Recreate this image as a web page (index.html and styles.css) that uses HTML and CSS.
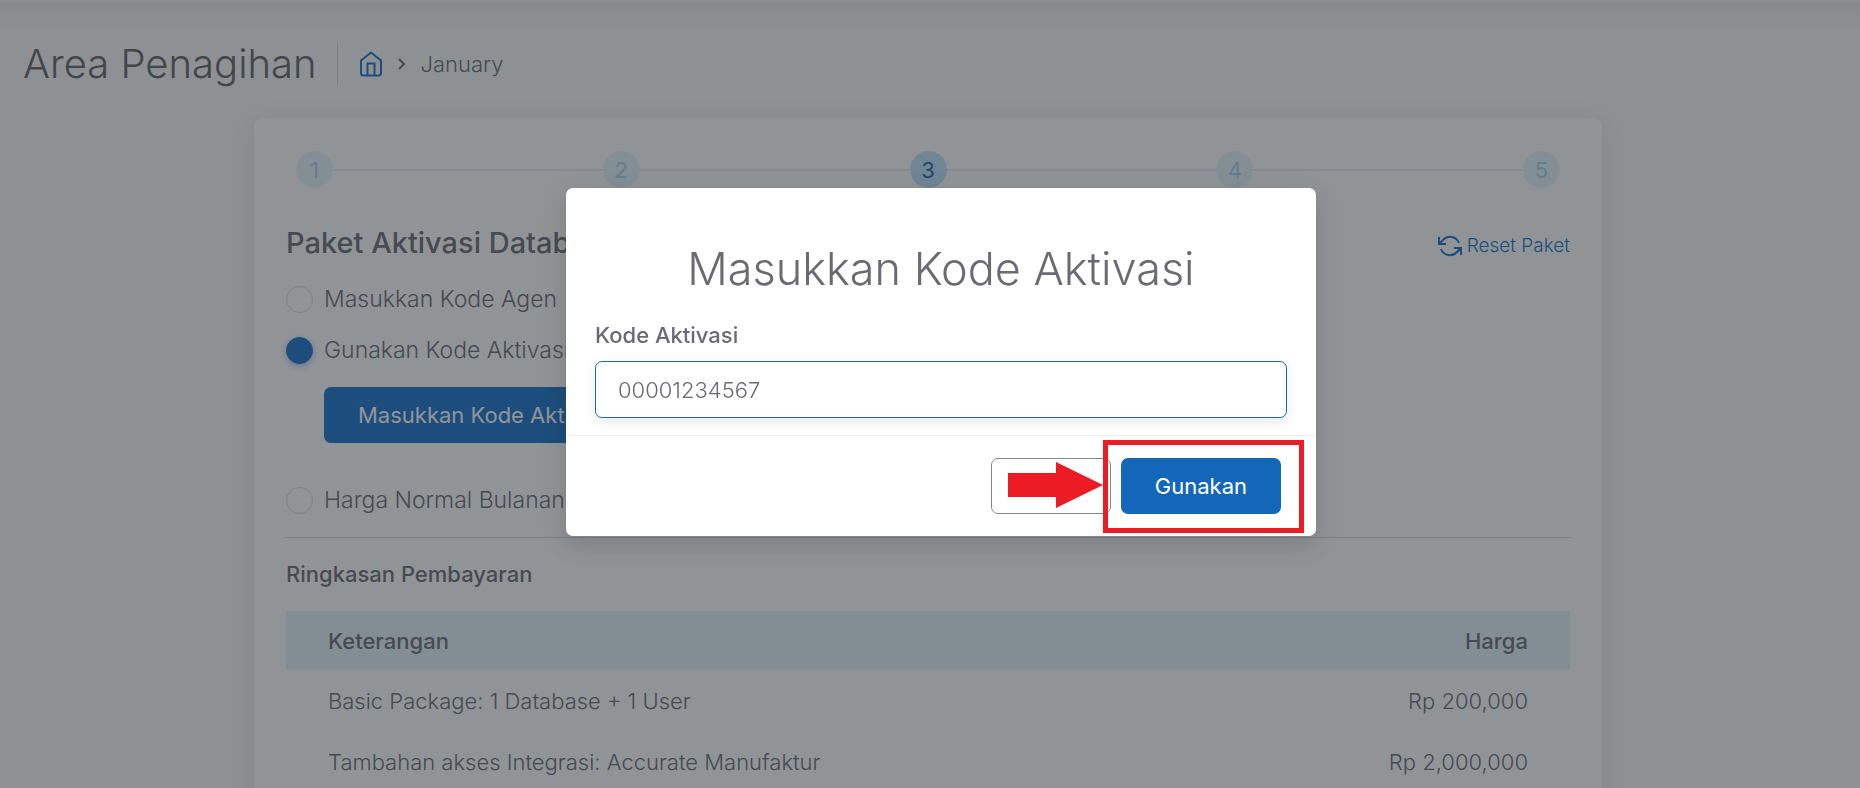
FILE: index.html
```
<!DOCTYPE html>
<html lang="id">
<head>
  <meta charset="utf-8">
  <title>Area Penagihan</title>
  <link rel="stylesheet" href="styles.css">
</head>
<body>
  <div class="page">
    <div class="navbar-shadow"></div>

    <!-- Page header -->
    <header class="content-header">
      <h1>Area Penagihan</h1>
      <nav class="breadcrumb">
        <a href="#" aria-label="Home">
          <svg width="24" height="28" viewBox="0 0 24 28" fill="none" stroke="currentColor" stroke-width="2" stroke-linejoin="round">
            <path d="M2 10.500L12 2.500l10 8V23a2.500 2.500 0 0 1-2.500 2.500h-15A2.500 2.500 0 0 1 2 23z"/>
            <path d="M8.500 25.500v-12h7v12" stroke-linejoin="miter"/>
          </svg>
        </a>
        <svg width="10" height="14" viewBox="0 0 10 14" fill="none" stroke="currentColor" stroke-width="2">
          <path d="M2 2l5 5-5 5"/>
        </svg>
        <span>January</span>
      </nav>
    </header>

    <main class="card">
      <ol class="steps">
        <li>1</li>
        <li>2</li>
        <li class="active">3</li>
        <li>4</li>
        <li>5</li>
      </ol>

      <div class="card-title">
        <h2>Paket Aktivasi Database</h2>
        <a href="#" class="reset">
          <svg width="24" height="22" viewBox="0 0 24 22" fill="none" stroke="currentColor" stroke-width="2">
            <path d="M1 2v7h7M1.500 8.500L5 5A9.500 9.500 0 0 1 21 8"/>
            <path d="M23 20v-7h-7M22.500 13.500L19 17A9.500 9.500 0 0 1 3 14"/>
          </svg>
          Reset Paket
        </a>
      </div>

      <div class="options">
        <label class="option"><input type="radio" name="paket">Masukkan Kode Agen</label>
        <label class="option"><input type="radio" name="paket" checked>Gunakan Kode Aktivasi</label>
        <button type="button" class="btn btn-primary btn-code">Masukkan Kode Aktivasi</button>
        <label class="option option-last"><input type="radio" name="paket">Harga Normal Bulanan</label>
      </div>

      <h3>Ringkasan Pembayaran</h3>
      <table class="summary">
        <thead>
          <tr><th>Keterangan</th><th>Harga</th></tr>
        </thead>
        <tbody>
          <tr><td>Basic Package: 1 Database + 1 User</td><td>Rp 200,000</td></tr>
          <tr><td>Tambahan akses Integrasi: Accurate Manufaktur</td><td>Rp 2,000,000</td></tr>
        </tbody>
      </table>
    </main>
  </div>

  <!-- Activation code modal -->
  <div class="backdrop">
    <div class="modal" role="dialog" aria-labelledby="modal-title">
      <div class="modal-body">
        <h2 id="modal-title">Masukkan Kode Aktivasi</h2>
        <label for="code">Kode Aktivasi</label>
        <input type="text" id="code" value="00001234567">
      </div>
      <div class="modal-footer">
        <button type="button" class="btn btn-outline" aria-label="Batal"></button>
        <div class="highlight">
          <button type="button" class="btn btn-primary">Gunakan</button>
          <div class="highlight-frame"></div>
          <svg class="highlight-arrow" width="95" height="46" viewBox="0 0 95 46">
            <path d="M0 11h48V0l47 23-47 23V35H0z" fill="#ed1c24"/>
          </svg>
        </div>
      </div>
    </div>
  </div>
</body>
</html>
```
FILE: styles.css
```
* {
  box-sizing: border-box;
  margin: 0;
  padding: 0;
}

body {
  font-family: Inter, "Open Sans", sans-serif;
  font-size: 22px;
  font-weight: 300;
  line-height: 28px;
  color: #6b6a72;
  background-color: #f8f8f8;
}

a {
  color: #1670c8;
  text-decoration: none;
}

.page {
  height: 100vh;
  padding-right: 4px;
  overflow: hidden;
}

/* Shadow under the fixed navbar */
.navbar-shadow {
  height: 32px;
  margin-right: -4px;
  border-top: 2px solid #f8f8f8;
  background: linear-gradient(#ececec, #f8f8f8);
}

/* Page header */
.content-header {
  display: flex;
  align-items: center;
  padding: 11px 23px 0;
}

.content-header h1 {
  font-size: 40px;
  font-weight: 300;
  line-height: 42px;
  color: #636363;
  padding-right: 20px;
  border-right: 1px solid #d6dce1;
}

.breadcrumb {
  display: flex;
  align-items: center;
  gap: 14px;
  padding-left: 21px;
}

.breadcrumb svg {
  display: block;
}

/* Card */
.card {
  width: 1348px;
  max-width: 100%;
  margin: 33px auto 0;
  padding: 33px 32px;
  background-color: #ffffff;
  border-radius: 8px;
  box-shadow: 0 4px 24px rgba(34, 41, 47, 0.1);
}

/* Stepper */
.steps {
  display: flex;
  justify-content: space-between;
  list-style: none;
  padding: 0 10px;
  background: linear-gradient(#ebe9f1, #ebe9f1) center / calc(100% - 56px) 2px no-repeat;
}

.steps li {
  display: flex;
  align-items: center;
  justify-content: center;
  width: 37px;
  height: 37px;
  border-radius: 50%;
  background-color: #e6f4fa;
  color: #a3cdec;
  font-weight: 400;
}

.steps .active {
  background-color: #bfe3fa;
  color: #1467b8;
}

.card-title {
  display: flex;
  align-items: center;
  justify-content: space-between;
  margin: 37px 0 24px;
}

.card-title h2 {
  font-size: 29px;
  font-weight: 500;
  line-height: 36px;
}

.reset {
  display: flex;
  align-items: center;
  gap: 5px;
  font-size: 19px;
  padding-top: 6px;
}

/* Package options */
.options {
  padding-bottom: 23px;
  border-bottom: 1px solid #d8d6de;
}

.option {
  display: flex;
  align-items: center;
  gap: 11px;
  margin-bottom: 23px;
  font-size: 23px;
}

.option-last {
  margin: 43px 0 0;
}

.option input {
  appearance: none;
  width: 27px;
  height: 27px;
  border: 1px solid #d8d6de;
  border-radius: 50%;
}

.option input:checked {
  border-color: #1670c8;
  background-color: #1670c8;
  box-shadow: 0 2px 6px rgba(20, 103, 184, 0.4);
}

.btn {
  height: 56px;
  padding: 0 34px;
  font-family: inherit;
  font-size: 22px;
  font-weight: 400;
  border: none;
  border-radius: 7px;
  cursor: pointer;
}

.btn-primary {
  color: #ffffff;
  background-color: #1467b8;
}

.btn-outline {
  width: 120px;
  background-color: transparent;
  border: 1px solid #82868b;
}

.btn-code {
  display: block;
  margin-left: 38px;
  background-color: #1670c8;
}

h3 {
  margin: 22px 0 23px;
  font-size: 22px;
  font-weight: 500;
  line-height: 28px;
}

/* Payment summary */
.summary {
  width: 100%;
  border-collapse: collapse;
}

.summary th,
.summary td {
  height: 61px;
  padding: 0 42px;
  text-align: left;
}

.summary th {
  height: 59px;
  font-weight: 500;
  background-color: #e3f3f9;
}

.summary th:last-child,
.summary td:last-child {
  text-align: right;
}

/* Modal */
.backdrop {
  position: fixed;
  inset: 0;
  padding: 188px 0 0 22px;
  background-color: rgba(34, 41, 47, 0.5);
}

.modal {
  width: 750px;
  max-width: 100%;
  margin: 0 auto;
  background-color: #ffffff;
  border-radius: 7px;
  box-shadow: 0 8px 24px rgba(34, 41, 47, 0.2);
}

.modal-body {
  padding: 55px 29px 17px;
}

.modal-body h2 {
  margin-bottom: 26px;
  font-size: 45px;
  font-weight: 300;
  line-height: 52px;
  text-align: center;
}

.modal-body label {
  display: block;
  margin-bottom: 12px;
  font-weight: 500;
}

.modal-body input {
  display: block;
  width: 100%;
  height: 57px;
  padding: 0 22px;
  font: inherit;
  color: inherit;
  border: 1px solid #1f6a9c;
  border-radius: 7px;
  outline: none;
  box-shadow: 0 4px 12px rgba(34, 41, 47, 0.1);
}

.modal-footer {
  display: flex;
  justify-content: flex-end;
  gap: 10px;
  padding: 22px 35px;
  border-top: 1px solid #ededf0;
}

/* Red callout round the confirm button */
.highlight {
  position: relative;
}

.highlight-frame {
  position: absolute;
  inset: -18px -23px -19px -18px;
  border: 5px solid #ed1c24;
  pointer-events: none;
}

.highlight-arrow {
  position: absolute;
  top: 4px;
  right: calc(100% + 18px);
}
```
